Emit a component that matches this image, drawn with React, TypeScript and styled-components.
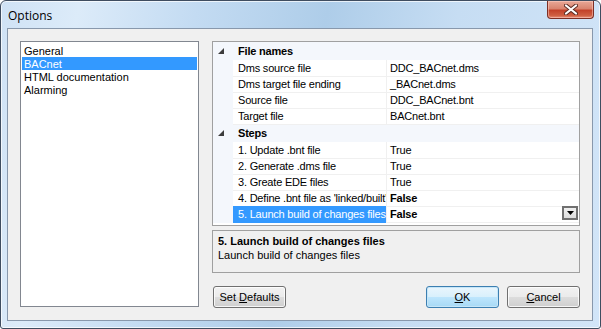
import styled, { createGlobalStyle, css } from 'styled-components';

const GlobalStyle = createGlobalStyle`
  html, body {
    margin: 0;
    padding: 0;
    background: #ffffff;
  }
  #root {
    width: 601px;
    height: 329px;
  }
`;

const Window = styled.div`
  box-sizing: border-box;
  width: 601px;
  height: 329px;
  border: 1px solid #3f4d60;
  border-radius: 6px 6px 3px 3px;
  background: linear-gradient(
    100deg,
    #cfe2f5 0%,
    #dcebf9 12%,
    #c3dbf2 30%,
    #aecde9 50%,
    #c6ddf3 70%,
    #d2e5f8 100%
  );
  box-shadow: inset 0 0 0 1px rgba(255, 255, 255, 0.7);
  display: flex;
  flex-direction: column;
  font-family: 'Liberation Sans', Arial, sans-serif;
`;

const TitleBar = styled.div`
  height: 28px;
  display: flex;
  justify-content: space-between;
  align-items: flex-start;
  padding: 0 6px 0 7px;
`;

const Title = styled.div`
  font-family: 'Open Sans', 'Noto Sans', sans-serif;
  font-size: 12px;
  color: #000;
  margin-top: 6px;
`;

const CloseButton = styled.div`
  width: 47px;
  height: 18px;
  box-sizing: border-box;
  border: 1px solid #7d2f25;
  border-top: none;
  border-radius: 0 0 4px 4px;
  background: linear-gradient(
    180deg,
    #e9a897 0%,
    #d9846f 45%,
    #c3422a 55%,
    #cf5f42 85%,
    #e7917a 100%
  );
  box-shadow: inset 0 0 0 1px rgba(255, 210, 200, 0.5);
  display: flex;
  align-items: center;
  justify-content: center;
`;

const Client = styled.div`
  flex: 1;
  margin: 0 7px 7px 6px;
  border: 1px solid #8898ac;
  background: #f0f0f0;
  padding: 12px;
  display: grid;
  grid-template-columns: 179px 368px;
  column-gap: 13px;
`;

const ListBox = styled.div`
  box-sizing: border-box;
  border: 1px solid #828790;
  background: #fff;
  padding: 2px 1px 1px;
  height: 266px;
`;

const ListItem = styled.div<{ $selected?: boolean }>`
  height: 13px;
  line-height: 14px;
  font-size: 11px;
  padding-left: 2px;
  color: #000;
  white-space: nowrap;
  ${(p) =>
    p.$selected &&
    css`
      background: #3399ff;
      color: #fff;
    `}
`;

const RightColumn = styled.div`
  display: flex;
  flex-direction: column;
`;

const PropGrid = styled.div`
  box-sizing: border-box;
  height: 185px;
  border: 1px solid #a0a0a0;
  background: #fff;
  overflow: hidden;
  letter-spacing: -0.2px;
`;

const CategoryRow = styled.div`
  height: 17px;
  display: flex;
  align-items: center;
  background: #f4f7fc;
  border-bottom: 1px solid #f4f7fc;
  font-size: 11px;
  font-weight: bold;
  color: #000;
`;

const Expander = styled.div`
  width: 20px;
  height: 17px;
  display: flex;
  align-items: center;
  justify-content: center;
  padding-right: 4px;
  box-sizing: border-box;
`;

const CategoryLabel = styled.div`
  padding-left: 5px;
`;

const PropRow = styled.div`
  height: 16px;
  display: grid;
  grid-template-columns: 20px 153px 1px 1fr;
  font-size: 11px;
  color: #000;
`;

const Gutter = styled.div`
  background: #f4f7fc;
`;

const NameCell = styled.div<{ $selected?: boolean }>`
  box-sizing: border-box;
  padding-left: 5px;
  line-height: 16px;
  border-bottom: 1px solid #f0f0f0;
  white-space: nowrap;
  overflow: hidden;
  ${(p) =>
    p.$selected &&
    css`
      background: #3399ff;
      color: #fff;
      border-bottom-color: #3399ff;
    `}
`;

const Separator = styled.div`
  background: #f0f0f0;
`;

const ValueCell = styled.div<{ $bold?: boolean }>`
  box-sizing: border-box;
  padding-left: 3px;
  line-height: 16px;
  border-bottom: 1px solid #f0f0f0;
  white-space: nowrap;
  display: flex;
  justify-content: space-between;
  align-items: flex-start;
  font-weight: ${(p) => (p.$bold ? 'bold' : 'normal')};
`;

const DropButton = styled.div`
  width: 16px;
  height: 14px;
  box-sizing: border-box;
  border: 2px solid #707070;
  background: linear-gradient(180deg, #f0f0f0, #dcdcdc);
  display: flex;
  align-items: center;
  justify-content: center;
  margin: 0 1px 0 0;
`;

const Description = styled.div`
  box-sizing: border-box;
  margin-top: 4px;
  height: 43px;
  border: 1px solid #a0a0a0;
  background: #f0f0f0;
  padding: 3px 0 0 5px;
  font-size: 11px;
  color: #000;
`;

const DescTitle = styled.div`
  font-weight: bold;
  line-height: 14px;
`;

const DescText = styled.div`
  line-height: 14px;
`;

const ButtonRow = styled.div`
  margin-top: 13px;
  display: flex;
  align-items: center;
  padding-left: 1px;
`;

const Spacer = styled.div`
  flex: 1;
`;

const Button = styled.div<{ $focused?: boolean }>`
  box-sizing: border-box;
  width: 73px;
  height: 22px;
  border: 1px solid #707070;
  border-radius: 3px;
  background: linear-gradient(180deg, #f2f2f2 0%, #ebebeb 49%, #dddddd 50%, #cfcfcf 100%);
  box-shadow: inset 0 0 0 1px rgba(255, 255, 255, 0.8);
  display: flex;
  align-items: center;
  justify-content: center;
  font-size: 11px;
  color: #000;
  & + & {
    margin-left: 8px;
  }
  u {
    text-decoration: underline;
    text-underline-offset: 1px;
  }
  ${(p) =>
    p.$focused &&
    css`
      border-color: #3c7fb1;
      background: linear-gradient(180deg, #eaf6fd 0%, #d9f0fc 49%, #bee6fd 50%, #a7d9f5 100%);
      box-shadow: inset 0 0 0 1px #c6e6f8;
    `}
`;

const Triangle = () => (
  <svg width="6" height="6" viewBox="0 0 6 6">
    <path d="M6 0 L6 6 L0 6 Z" fill="#3c3c3c" />
  </svg>
);

type Prop = { name: string; value: string; bold?: boolean; selected?: boolean };

const fileNames: Prop[] = [
  { name: 'Dms source file', value: 'DDC_BACnet.dms' },
  { name: 'Dms target file ending', value: '_BACnet.dms' },
  { name: 'Source file', value: 'DDC_BACnet.bnt' },
  { name: 'Target file', value: 'BACnet.bnt' },
];

const steps: Prop[] = [
  { name: '1. Update .bnt file', value: 'True' },
  { name: '2. Generate .dms file', value: 'True' },
  { name: '3. Greate EDE files', value: 'True' },
  { name: "4. Define .bnt file as 'linked/built'", value: 'False', bold: true },
  { name: '5. Launch build of changes files', value: 'False', bold: true, selected: true },
];

function Rows({ items }: { items: Prop[] }) {
  return (
    <>
      {items.map((p) => (
        <PropRow key={p.name}>
          <Gutter />
          <NameCell $selected={p.selected}>{p.name}</NameCell>
          <Separator />
          <ValueCell $bold={p.bold}>
            <span>{p.value}</span>
            {p.selected && (
              <DropButton>
                <svg width="7" height="4" viewBox="0 0 7 4">
                  <path d="M0 0 L7 0 L3.5 4 Z" fill="#000" />
                </svg>
              </DropButton>
            )}
          </ValueCell>
        </PropRow>
      ))}
    </>
  );
}

function App() {
  return (
    <>
      <GlobalStyle />
      <Window>
        <TitleBar>
          <Title>Options</Title>
          <CloseButton>
            <svg width="14" height="11" viewBox="0 0 14 11">
              <path
                d="M2 1.5 L12 9.5 M12 1.5 L2 9.5"
                stroke="#5a2a22"
                strokeWidth="4"
                strokeLinecap="round"
              />
              <path
                d="M2 1.5 L12 9.5 M12 1.5 L2 9.5"
                stroke="#ffffff"
                strokeWidth="2.2"
                strokeLinecap="round"
              />
            </svg>
          </CloseButton>
        </TitleBar>
        <Client>
          <ListBox>
            <ListItem>General</ListItem>
            <ListItem $selected>BACnet</ListItem>
            <ListItem>HTML documentation</ListItem>
            <ListItem>Alarming</ListItem>
          </ListBox>
          <RightColumn>
            <PropGrid>
              <CategoryRow>
                <Expander>
                  <Triangle />
                </Expander>
                <CategoryLabel>File names</CategoryLabel>
              </CategoryRow>
              <Rows items={fileNames} />
              <CategoryRow>
                <Expander>
                  <Triangle />
                </Expander>
                <CategoryLabel>Steps</CategoryLabel>
              </CategoryRow>
              <Rows items={steps} />
            </PropGrid>
            <Description>
              <DescTitle>5. Launch build of changes files</DescTitle>
              <DescText>Launch build of changes files</DescText>
            </Description>
            <ButtonRow>
              <Button>
                Set&nbsp;<u>D</u>efaults
              </Button>
              <Spacer />
              <Button $focused>
                <u>O</u>K
              </Button>
              <Button>
                <u>C</u>ancel
              </Button>
            </ButtonRow>
          </RightColumn>
        </Client>
      </Window>
    </>
  );
}

export default App;
